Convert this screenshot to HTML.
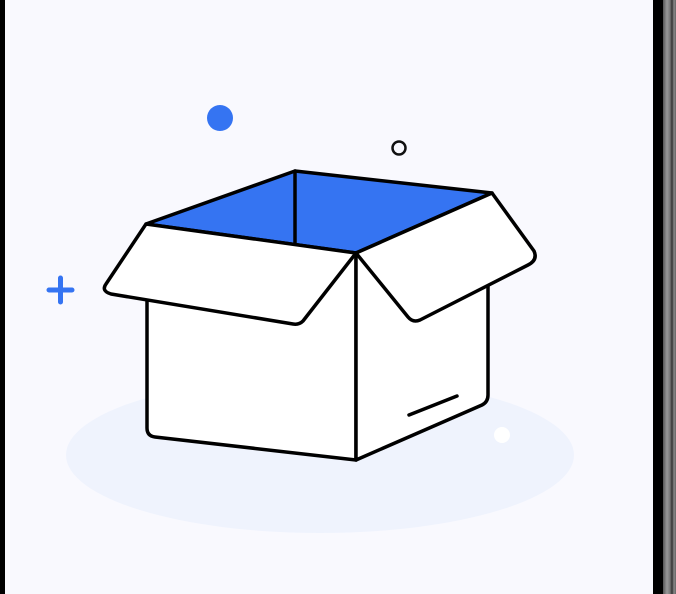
<!DOCTYPE html>
<html><head><style>
html,body{margin:0;padding:0;}
body{width:676px;height:594px;background:#f9f9fe;position:relative;overflow:hidden;}
.l{position:absolute;left:0;top:0;width:5px;height:594px;background:#000;}
.r{position:absolute;left:653px;top:0;width:23px;height:594px;background:linear-gradient(90deg,#000 0,#000 10px,#555 10px,#999 14px,#777 17px,#333 19px,#888 21px,#666 23px);}
</style></head><body>
<div class="l"></div><div class="r"></div>
<svg width="676" height="594" style="position:absolute;left:0;top:0">
<ellipse cx="320" cy="455" rx="254" ry="78" fill="#eff3fd"/>
<circle cx="220" cy="118" r="13" fill="#3574f2"/>
<circle cx="399" cy="148" r="6.5" fill="none" stroke="#111" stroke-width="2.5"/>
<circle cx="502" cy="435" r="8" fill="#fff"/>
<path d="M49 290H72M60.5 278V302" stroke="#3574f2" stroke-width="5" stroke-linecap="round"/>
<g stroke="#000" stroke-width="3.5" stroke-linejoin="round" stroke-linecap="round">
<polygon points="146,224 295,171 492,193 356,253" fill="#3574f2"/>
<line x1="295" y1="171" x2="295" y2="245"/>
<path d="M147 295V428Q147 436 155 437L356 460V253Z" fill="#fff"/>
<path d="M356 253V460L482 405Q488 402 488 395V285Z" fill="#fff"/>
<path d="M146 224L356 253L303 321Q299 325 293 324L111 294Q101 291 106 284Z" fill="#fff"/>
<path d="M356 253L492 193L534 251Q538 260 528 265L420 320Q413 323 408 317Z" fill="#fff"/>
<line x1="409" y1="415" x2="457" y2="396"/>
</g>
</svg>
</body></html>
